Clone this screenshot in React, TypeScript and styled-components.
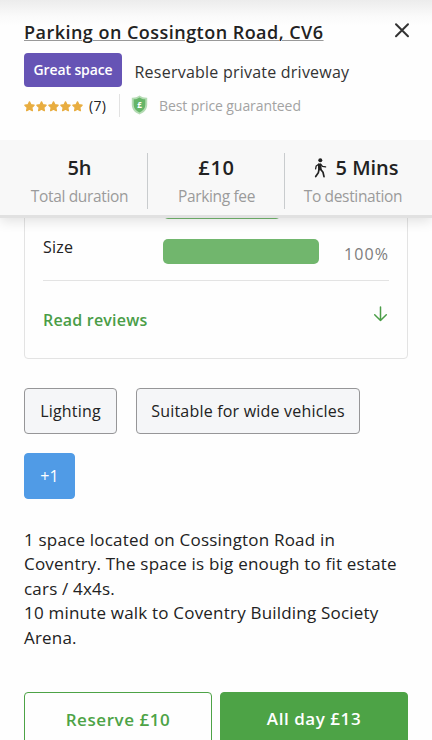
import React from "react";
import styled, { createGlobalStyle } from "styled-components";

const GlobalStyle = createGlobalStyle`
  *, *::before, *::after { box-sizing: border-box; }
  html, body { margin: 0; background: #fefefe; overflow: hidden; }
  body, button { font-family: "Open Sans", "Noto Sans", sans-serif; color: #222; }
`;

const Page = styled.main`
  width: 432px;
  height: 740px;
  overflow: hidden;
  display: flex;
  flex-direction: column;
`;

const Header = styled.header`
  flex: none;
  position: relative;
  z-index: 1;
  height: 218px;
  background: linear-gradient(#ececec 0, #fafafa 16px, #fefefe 26px);
  border-bottom: 3px solid #e1e1e1;
  box-shadow: 0 3px 12px rgba(0, 0, 0, 0.12);
`;

const HeaderTop = styled.div`
  height: 140px;
  padding: 20px 22px 0 24px;
`;

const TitleRow = styled.div`
  display: flex;
  justify-content: space-between;
  height: 33px;
`;

const Title = styled.h1`
  margin: 0;
  font-size: 18px;
  font-weight: 600;
  line-height: 25px;
  letter-spacing: 0.47px;
  white-space: nowrap;
  text-decoration: underline;
  text-decoration-color: #999;
  text-decoration-thickness: 1px;
  text-underline-offset: 1px;
`;

const CloseButton = styled.button`
  display: flex;
  width: 16px;
  height: 16px;
  margin-top: 2px;
  padding: 0;
  border: 0;
  background: none;
`;

const SummaryRow = styled.div`
  display: flex;
  align-items: center;
  gap: 12.5px;
  height: 34px;
`;

const GreatBadge = styled.span`
  width: 98px;
  height: 34px;
  border-radius: 4px;
  background: #6654b5;
  color: #fff;
  font-size: 14px;
  font-weight: 600;
  line-height: 33px;
  letter-spacing: -0.13px;
  text-align: center;
`;

const SpaceType = styled.span`
  font-size: 16px;
  line-height: 24px;
  letter-spacing: 0.23px;
  padding-top: 4px;
  color: #333;
  white-space: nowrap;
`;

const RatingRow = styled.div`
  display: flex;
  align-items: center;
  height: 24px;
  margin-top: 6px;
`;

const Stars = styled.div`
  display: flex;
  gap: 1px;
  margin-top: 3px;
`;

const ReviewCount = styled.span`
  width: 30px;
  margin-left: 6px;
  font-size: 14px;
  letter-spacing: 0.35px;
  line-height: 24px;
  padding-top: 1px;
`;

const RatingDivider = styled.span`
  width: 1px;
  height: 23px;
  background: #e2e2e2;
`;

const Guarantee = styled.div`
  display: flex;
  align-items: center;
  gap: 11px;
  margin-left: 11px;
  font-size: 14px;
  line-height: 24px;
  letter-spacing: -0.08px;
  color: #a3a3a3;
`;

const GuaranteeText = styled.span`
  padding-top: 1px;
`;

const Stats = styled.section`
  display: grid;
  grid-template-columns: 137px 137px 136px;
  height: 75px;
  padding: 13px 11px 10px;
  background: #f8f8f8;
`;

const Stat = styled.div`
  display: flex;
  flex-direction: column;
  align-items: center;
  & + & { box-shadow: -1px 0 #c9ccce; }
`;

const StatValue = styled.strong<{ $spacing: number; $shift?: number }>`
  display: flex;
  align-items: center;
  gap: 9px;
  height: 29px;
  padding-left: ${(p) => p.$shift ?? 0}px;
  font-size: 20px;
  font-weight: 600;
  line-height: 29px;
  letter-spacing: ${(p) => p.$spacing}px;
`;

const StatLabel = styled.span`
  padding-top: 1px;
  font-size: 15.5px;
  line-height: 26px;
  letter-spacing: -0.34px;
  color: #9b9b9b;
`;

const Content = styled.div`
  padding: 0 24px;
`;

const RatingsCard = styled.section`
  height: 164px;
  margin-top: -23px;
  padding: 0 18px;
  border: 1px solid #e3e3e3;
  border-radius: 4px;
`;

const ScoreRow = styled.div<{ $height: number }>`
  display: grid;
  grid-template-columns: 120px 156px 1fr;
  height: ${(p) => p.$height}px;
`;

const ScoreName = styled.span`
  padding-top: 11px;
  font-size: 16px;
  line-height: 24px;
  letter-spacing: 0.25px;
`;

const ScoreBar = styled.div<{ $width: number; $top?: number }>`
  grid-column: 2;
  width: ${(p) => p.$width}px;
  height: 25px;
  margin-top: ${(p) => p.$top ?? 0}px;
  border-radius: 5px;
  background: #71b66d;
`;

const ScoreValue = styled.span`
  padding-top: 18px;
  font-size: 16px;
  line-height: 24px;
  letter-spacing: 1.1px;
  text-align: right;
  color: #7c7c7c;
`;

const ReadReviews = styled.a`
  display: flex;
  justify-content: space-between;
  height: 78px;
  padding: 25px 1px 0 0;
  border-top: 1px solid #e3e3e3;
  color: #4a9d47;
  font-size: 16px;
  font-weight: 600;
  line-height: 28px;
  letter-spacing: 0.2px;
`;

const Chips = styled.div`
  display: flex;
  flex-wrap: wrap;
  gap: 19px;
  margin-top: 29px;
`;

const Chip = styled.span<{ $width: number; $accent?: boolean }>`
  width: ${(p) => p.$width}px;
  height: 46px;
  border: 1px solid ${(p) => (p.$accent ? "#509be6" : "#969698")};
  border-radius: 4px;
  background: ${(p) => (p.$accent ? "#509be6" : "#f5f6f8")};
  color: ${(p) => (p.$accent ? "#fff" : "#222")};
  font-size: 16px;
  line-height: 45px;
  letter-spacing: 0.2px;
  text-align: center;
  white-space: nowrap;
`;

const Description = styled.p`
  margin: 29px -10px 0 0;
  font-size: 17px;
  line-height: 24.4px;
  letter-spacing: 0.2px;
  white-space: pre-line;
`;

const Actions = styled.div`
  display: grid;
  grid-template-columns: 1fr 1fr;
  gap: 8px;
  margin-top: 42px;
`;

const Action = styled.button<{ $filled?: boolean }>`
  height: 58px;
  padding: 0 0 ${(p) => (p.$filled ? 5 : 3)}px;
  border: 1.5px solid #4da346;
  border-radius: 4px;
  background: ${(p) => (p.$filled ? "#4da346" : "#fefefe")};
  color: ${(p) => (p.$filled ? "#fff" : "#4da346")};
  font-size: 17px;
  font-weight: 600;
  letter-spacing: 0.55px;
`;

const Star = () => (
  <svg width="11" height="11" viewBox="0 0 24 24" fill="#e8ad40" stroke="#e8ad40" strokeWidth="3" strokeLinejoin="round">
    <path d="M12 2l3.1 6.300 6.900 1-5 4.900 1.200 6.800-6.200-3.200-6.200 3.200L7 14.200 2 9.300l6.900-1z" />
  </svg>
);

const CloseIcon = () => (
  <svg width="16" height="16" viewBox="0 0 16 16" fill="none" stroke="#333" strokeWidth="2" strokeLinecap="round">
    <path d="M2 2.300l12 12M14 2.300l-12 12" />
  </svg>
);

const ShieldIcon = () => (
  <svg width="17" height="20" viewBox="0 0 17 20">
    <path d="M8.500.5c2.400 1.800 4.800 2.300 7.700 2.200v7.100c0 4.500-2.800 7.600-7.700 9.700C3.600 17.400.8 14.300.8 9.800V2.700C3.700 2.800 6.100 2.300 8.500.5z" fill="#b4dbb3" />
    <path d="M8.500 2.500c1.900 1.300 3.800 1.800 5.800 1.800v5.500c0 3.500-2.100 5.900-5.800 7.600-3.700-1.700-5.800-4.100-5.800-7.600V4.300c2 0 3.900-.5 5.800-1.800z" fill="#65b568" />
    <text x="8.500" y="12.700" textAnchor="middle" fill="#fff" fontFamily="Open Sans" fontWeight="700" fontSize="8">£</text>
  </svg>
);

const WalkIcon = () => (
  <svg width="13" height="20" viewBox="0 0 13 20" fill="none" stroke="#222" strokeLinecap="round" strokeLinejoin="round">
    <circle cx="6.300" cy="2.300" r="2" fill="#222" stroke="none" />
    <path d="M4.600 6.300L6.600 6.200 7 11.500 4.800 11.500z" fill="#222" strokeWidth="1.400" />
    <path d="M4.700 6.300L2.200 8 1.600 10.800M6.800 6.300L8.500 8.400 11.600 8.900" strokeWidth="1.300" />
    <path d="M4.900 11.800L4.300 14.800 1.700 18.600M6.800 11.500L9 14.300 10 18.600" strokeWidth="1.700" />
  </svg>
);

const ArrowDown = () => (
  <svg width="15" height="16" viewBox="0 0 15 16" fill="none" stroke="#4a9d47" strokeWidth="1.500" strokeLinecap="round" strokeLinejoin="round">
    <path d="M7.500 1v13.500M1.700 8.700l5.800 5.800 5.800-5.800" />
  </svg>
);

export default function App() {
  return (
    <Page>
      <GlobalStyle />
      <Header>
        <HeaderTop>
          <TitleRow>
            <Title>Parking on Cossington Road, CV6</Title>
            <CloseButton aria-label="Close"><CloseIcon /></CloseButton>
          </TitleRow>
          <SummaryRow>
            <GreatBadge>Great space</GreatBadge>
            <SpaceType>Reservable private driveway</SpaceType>
          </SummaryRow>
          <RatingRow>
            <Stars>{[1, 2, 3, 4, 5].map((n) => <Star key={n} />)}</Stars>
            <ReviewCount>(7)</ReviewCount>
            <RatingDivider />
            <Guarantee>
              <ShieldIcon />
              <GuaranteeText>Best price guaranteed</GuaranteeText>
            </Guarantee>
          </RatingRow>
        </HeaderTop>
        <Stats>
          <Stat>
            <StatValue $spacing={0}>5h</StatValue>
            <StatLabel>Total duration</StatLabel>
          </Stat>
          <Stat>
            <StatValue $spacing={0.8}>£10</StatValue>
            <StatLabel>Parking fee</StatLabel>
          </Stat>
          <Stat>
            <StatValue $spacing={-0.05} $shift={6}><WalkIcon /><span>5 Mins</span></StatValue>
            <StatLabel>To destination</StatLabel>
          </Stat>
        </Stats>
      </Header>
      <Content>
        <RatingsCard>
          <ScoreRow $height={28}><ScoreBar $width={118} $top={-2} /></ScoreRow>
          <ScoreRow $height={56}>
            <ScoreName>Size</ScoreName>
            <ScoreBar $width={156} $top={15} />
            <ScoreValue>100%</ScoreValue>
          </ScoreRow>
          <ReadReviews>Read reviews<ArrowDown /></ReadReviews>
        </RatingsCard>
        <Chips>
          <Chip $width={93}>Lighting</Chip>
          <Chip $width={224}>Suitable for wide vehicles</Chip>
          <Chip $width={51} $accent>+1</Chip>
        </Chips>
        <Description>
          {"1 space located on Cossington Road in\nCoventry. The space is big enough to fit estate\ncars / 4x4s.\n10 minute walk to Coventry Building Society\nArena."}
        </Description>
        <Actions>
          <Action>Reserve £10</Action>
          <Action $filled>All day £13</Action>
        </Actions>
      </Content>
    </Page>
  );
}
